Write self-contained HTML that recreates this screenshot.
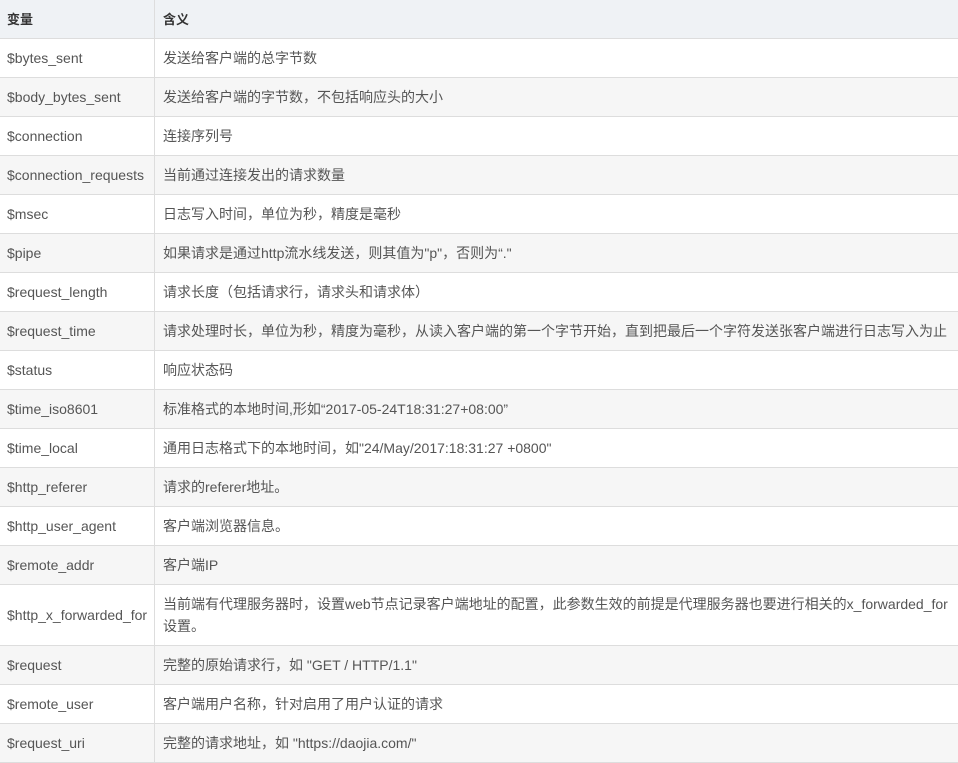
<!DOCTYPE html>
<html><head><meta charset="utf-8"><style>
body{margin:0;width:958px;height:762px;overflow:hidden;background:#fff;font-family:"Liberation Sans","Noto Sans CJK SC",sans-serif;font-size:14px;color:#555;}
.r{display:flex;height:38px;border-bottom:1px solid #ddd;}
.r:nth-child(odd){background:#f6f6f6}
.r.h{background:#eff2f5;font-weight:bold;color:#333;font-size:13px}
.a{width:147px;padding-left:7px;border-right:1px solid #ddd;display:flex;align-items:center;}
.b{flex:1;padding-left:8px;display:flex;align-items:center;line-height:22px;}
.r.h .a,.r.h .b{display:block;line-height:38px;font-family:"Noto Sans CJK SC",sans-serif;}
.r.t{height:60px}
</style></head><body>
<div class="r h"><div class="a">变量</div><div class="b">含义</div></div>
<div class="r"><div class="a">$bytes_sent</div><div class="b">发送给客户端的总字节数</div></div>
<div class="r"><div class="a">$body_bytes_sent</div><div class="b">发送给客户端的字节数，不包括响应头的大小</div></div>
<div class="r"><div class="a">$connection</div><div class="b">连接序列号</div></div>
<div class="r"><div class="a">$connection_requests</div><div class="b">当前通过连接发出的请求数量</div></div>
<div class="r"><div class="a">$msec</div><div class="b">日志写入时间，单位为秒，精度是毫秒</div></div>
<div class="r"><div class="a">$pipe</div><div class="b">如果请求是通过http流水线发送，则其值为"p"，否则为“."</div></div>
<div class="r"><div class="a">$request_length</div><div class="b">请求长度（包括请求行，请求头和请求体）</div></div>
<div class="r"><div class="a">$request_time</div><div class="b">请求处理时长，单位为秒，精度为毫秒，从读入客户端的第一个字节开始，直到把最后一个字符发送张客户端进行日志写入为止</div></div>
<div class="r"><div class="a">$status</div><div class="b">响应状态码</div></div>
<div class="r"><div class="a">$time_iso8601</div><div class="b">标准格式的本地时间,形如“2017-05-24T18:31:27+08:00”</div></div>
<div class="r"><div class="a">$time_local</div><div class="b">通用日志格式下的本地时间，如"24/May/2017:18:31:27 +0800"</div></div>
<div class="r"><div class="a">$http_referer</div><div class="b">请求的referer地址。</div></div>
<div class="r"><div class="a">$http_user_agent</div><div class="b">客户端浏览器信息。</div></div>
<div class="r"><div class="a">$remote_addr</div><div class="b">客户端IP</div></div>
<div class="r t"><div class="a">$http_x_forwarded_for</div><div class="b">当前端有代理服务器时，设置web节点记录客户端地址的配置，此参数生效的前提是代理服务器也要进行相关的x_forwarded_for设置。</div></div>
<div class="r"><div class="a">$request</div><div class="b">完整的原始请求行，如 "GET / HTTP/1.1"</div></div>
<div class="r"><div class="a">$remote_user</div><div class="b">客户端用户名称，针对启用了用户认证的请求</div></div>
<div class="r"><div class="a">$request_uri</div><div class="b">完整的请求地址，如 "https://daojia.com/"</div></div>
</body></html>
